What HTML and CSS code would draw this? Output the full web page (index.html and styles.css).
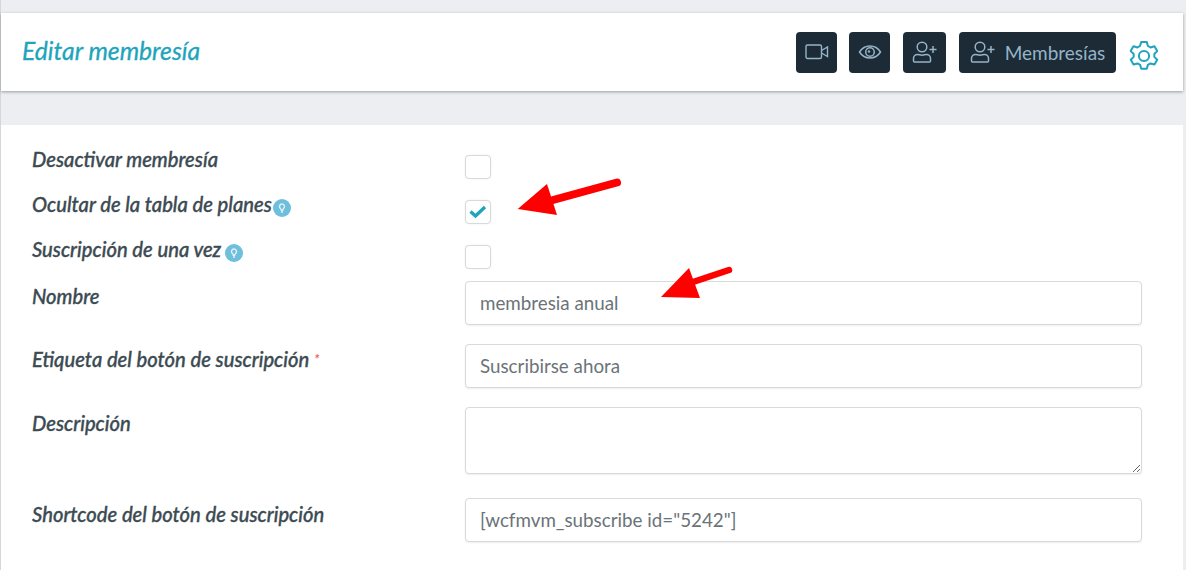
FILE: index.html
```html
<!DOCTYPE html>
<html lang="es">
<head>
<meta charset="utf-8">
<title>Editar membresía</title>
<link rel="stylesheet" href="styles.css">
</head>
<body>
<div class="page">
  <header class="head">
    <h1 class="title">Editar membresía</h1>
    <nav class="actions">
      <a class="btn btn-video"><svg width="24" height="24" viewBox="0 0 24 24" fill="none" stroke="currentColor" stroke-width="1.4"><rect x="1" y="5" width="15.500" height="13.500" rx="1.500"/><path d="M16.500 10.500 22.500 7v9.500l-6-3.500"/></svg></a>
      <a class="btn btn-eye"><svg width="24" height="24" viewBox="0 0 24 24" fill="none" stroke="currentColor" stroke-width="1.5"><path d="M1.500 12C4 8 7.500 6 12 6s8 2 10.500 6c-2.500 4-6 6-10.500 6s-8-2-10.500-6z"/><circle cx="12" cy="12" r="4.300"/><circle cx="11" cy="11.500" r="1.200" fill="currentColor" stroke="none"/></svg></a>
      <a class="btn btn-user"><svg width="26" height="24" viewBox="0 0 26 24" fill="none" stroke="currentColor" stroke-width="1.500"><circle cx="10" cy="7" r="4.800"/><path d="M1.500 21v-2.500c0-2.500 2-4 4-4 1.500 0 2.500.7 4.500.7s3-.7 4.500-.7c2 0 4 1.500 4 4V21c0 .6-.4 1-1 1h-15c-.6 0-1-.4-1-1z"/><path d="M17.500 9.500h7M21 6v7"/></svg></a>
      <a class="btn btn-wide"><svg width="26" height="24" viewBox="0 0 26 24" fill="none" stroke="currentColor" stroke-width="1.500"><circle cx="10" cy="7" r="4.800"/><path d="M1.500 21v-2.500c0-2.500 2-4 4-4 1.500 0 2.500.7 4.500.7s3-.7 4.500-.7c2 0 4 1.500 4 4V21c0 .6-.4 1-1 1h-15c-.6 0-1-.4-1-1z"/><path d="M17.500 9.500h7M21 6v7"/></svg><span>Membresías</span></a>
      <svg class="gear" width="30" height="30" viewBox="1.500 1.500 27 27" fill="none" stroke="currentColor" stroke-width="1.800" stroke-linejoin="round"><circle cx="15" cy="15" r="4.600"/><path d="M12.500 2.500h5l1 3.500 2.300 1.300 3.600-1 2.500 4.300-2.600 2.600v2.600l2.600 2.600-2.500 4.300-3.600-1-2.300 1.300-1 3.500h-5l-1-3.500-2.300-1.300-3.600 1-2.500-4.300 2.600-2.600v-2.600L3 10.600l2.500-4.300 3.600 1 2.300-1.300z"/></svg>
    </nav>
  </header>
  <form class="card">
    <div class="row row-check row-1">
      <label class="lbl">Desactivar membresía</label>
      <span class="check"></span>
    </div>
    <div class="row row-check row-2">
      <label class="lbl">Ocultar de la tabla de planes <svg class="tip tip-long" width="18" height="18" viewBox="0 0 18 18"><circle cx="9" cy="9" r="9" fill="#6dbfdb"/><path d="M6.500 7.500a2.500 2.500 0 1 1 4.300 1.700c-.7.7-1.100 1-1.100 2H8.300c0-1-.4-1.300-1.100-2a2.500 2.500 0 0 1-.7-1.700zM8 13h2" fill="none" stroke="#e4f3f8" stroke-width="1.400"/></svg></label>
      <span class="check"><svg width="18" height="14" viewBox="0 0 18 14" fill="none" stroke="#20a4bb" stroke-width="3.400"><path d="M1.500 6.500 6.500 11 16 2"/></svg></span>
    </div>
    <div class="row row-check row-3">
      <label class="lbl">Suscripción de una vez <svg class="tip" width="18" height="18" viewBox="0 0 18 18"><circle cx="9" cy="9" r="9" fill="#6dbfdb"/><path d="M6.500 7.500a2.500 2.500 0 1 1 4.300 1.700c-.7.7-1.100 1-1.100 2H8.300c0-1-.4-1.300-1.100-2a2.500 2.500 0 0 1-.7-1.700zM8 13h2" fill="none" stroke="#e4f3f8" stroke-width="1.400"/></svg></label>
      <span class="check"></span>
    </div>
    <div class="row row-4">
      <label class="lbl">Nombre</label>
      <input class="field" type="text" value="membresia anual">
    </div>
    <div class="row row-5">
      <label class="lbl">Etiqueta del botón de suscripción <span class="req">*</span></label>
      <input class="field" type="text" value="Suscribirse ahora">
    </div>
    <div class="row row-6">
      <label class="lbl">Descripción</label>
      <textarea class="field area"></textarea>
    </div>
    <div class="row row-7">
      <label class="lbl">Shortcode del botón de suscripción</label>
      <input class="field" type="text" value='[wcfmvm_subscribe id="5242"]'>
    </div>
  </form>
  <svg class="arrow arrow-a" width="110" height="44" viewBox="0 0 110 44" fill="#fe0000"><path d="M36 23 100 5.500" fill="none" stroke="#fe0000" stroke-width="8" stroke-linecap="round"/><path d="M.7 32 30 7 40 38z"/></svg>
  <svg class="arrow arrow-b" width="76" height="34" viewBox="0 0 76 34" fill="#fe0000"><path d="M32 16 68 4" fill="none" stroke="#fe0000" stroke-width="6.500" stroke-linecap="round"/><path d="M0 31 28 2 39 32z"/></svg>
</div>
</body>
</html>
```
FILE: styles.css
```css
* { box-sizing: border-box; }
html, body { margin: 0; padding: 0; }
body {
  width: 1186px;
  height: 570px;
  overflow: hidden;
  background: #eceef2;
  font-family: Lato, "Liberation Sans", sans-serif;
}
.page { position: relative; height: 570px; padding-top: 13px; border-left: 1px solid #d5d6d9; }
.head {
  width: 1182px;
  height: 78px;
  background: #fff;
  box-shadow: 0 1px 3px rgba(0, 0, 0, .35);
  display: flex;
  align-items: center;
  justify-content: space-between;
  padding: 0 24px 0 21px;
}
.title {
  margin: 0;
  font-size: 24.700px;
  font-weight: 400;
  font-style: italic;
  color: #20a4bb;
  -webkit-text-stroke: .3px #20a4bb;
  position: relative;
  top: -2px;
}
.actions { display: flex; align-items: center; }
.btn {
  height: 41px;
  background: #1c2b36;
  color: #94b4c7;
  border-radius: 4px;
  display: flex;
  align-items: center;
  justify-content: center;
  margin-right: 12px;
}
.btn-video { width: 41px; }
.btn-eye { width: 41px; margin-right: 13px; }
.btn-user { width: 43px; margin-right: 13px; }
.btn-wide { width: 157px; gap: 9px; font-size: 19px; margin-right: 13px; }
.gear { color: #20a4bb; margin-top: 7px; }
.card {
  margin-top: 34px;
  width: 1182px;
  height: 445px;
  background: #fff;
  padding: 30px 0 0 31px;
}
.row { display: grid; grid-template-columns: 433px 677px; }
.row-check { height: 24px; }
.row-2, .row-3 { margin-top: 21px; }
.row-4 { margin-top: 12px; }
.row-5 { margin-top: 19px; }
.row-6 { margin-top: 19px; }
.row-7 { margin-top: 24px; }
.lbl {
  font-size: 20.200px;
  line-height: 22px;
  font-weight: 500;
  font-style: italic;
  color: #3c4a52;
  -webkit-text-stroke: .35px #3c4a52;
  margin-top: -7px;
}
.row-4 .lbl, .row-5 .lbl { margin-top: 4px; }
.row-6 .lbl, .row-7 .lbl { margin-top: 5px; }
.tip { vertical-align: -5px; margin-left: -1px; -webkit-text-stroke: 0; }
.tip-long { margin-left: -3px; }
.req { color: #e8473f; font-weight: 400; font-size: 14px; vertical-align: 3px; -webkit-text-stroke: 0; }
.check {
  width: 26px;
  height: 24px;
  background: #fff;
  border: 1px solid #d9d9d9;
  border-radius: 4px;
  box-shadow: 0 0 2px rgba(0, 0, 0, .08);
  display: flex;
  align-items: center;
  justify-content: center;
}
.field {
  display: block;
  width: 677px;
  height: 44px;
  padding: 0 14px 2px;
  background: #fff;
  border: 1px solid #d9d9d9;
  border-radius: 4px;
  box-shadow: 0 1px 2px rgba(0, 0, 0, .07);
  color: #6b7378;
  font-family: Lato, "Liberation Sans", sans-serif;
  font-size: 18.800px;
  outline: none;
}
.area { height: 67px; resize: vertical; }
.arrow { position: absolute; }
.arrow-a { left: 516px; top: 177px; }
.arrow-b { left: 660px; top: 266px; }
```
